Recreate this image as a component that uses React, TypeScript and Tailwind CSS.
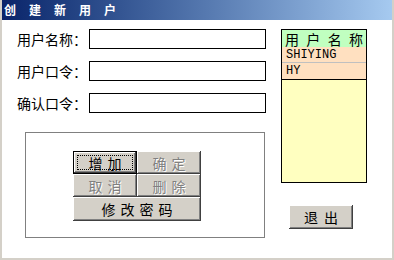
import React from 'react';

const cjk = { fontFamily: '"Noto Sans CJK SC", "Liberation Sans", sans-serif' };

const raised =
  'bg-[#d4d0c8] shadow-[inset_-1px_-1px_0_#404040,inset_1px_1px_0_#ffffff,inset_-2px_-2px_0_#808080]';

const Btn = ({
  label,
  disabled,
  focused,
  className = '',
}: {
  label: string;
  disabled?: boolean;
  focused?: boolean;
  className?: string;
}) => {
  if (focused) {
    return (
      <div className={`border border-black ${className}`}>
        <div className={`${raised} h-full p-[3px]`}>
          <div className="h-full border border-dotted border-black flex items-center justify-center text-[14px] leading-none text-black tracking-[5px] pl-[5px]">
            {label}
          </div>
        </div>
      </div>
    );
  }
  return (
    <div
      className={`${raised} flex items-center justify-center text-[14px] leading-none tracking-[5px] pl-[5px] ${
        disabled ? 'text-[#808080] [text-shadow:1px_1px_0_#ffffff]' : 'text-black'
      } ${className}`}
    >
      {label}
    </div>
  );
};

const fields = ['用户名称：', '用户口令：', '确认口令：'];

export default function App() {
  return (
    <div className="w-[394px] h-[260px] bg-[#d4d0c8] px-[2px] pb-[2px] flex flex-col" style={cjk}>
      <div className="h-[20px] bg-gradient-to-r from-[#0a246a] to-[#a6caf0] flex items-center pl-[2px]">
        <span className="text-white font-bold text-[12px] tracking-[13px] leading-none">创建新用户</span>
      </div>
      <div className="flex-1 bg-white flex pt-[9px]">
        {/* left side */}
        <div className="w-[279px] pl-[15px] flex flex-col">
          <div className="flex flex-col gap-[12px]">
            {fields.map((f) => (
              <div key={f} className="flex items-center h-[20px]">
                <span className="w-[72px] text-[14px] leading-none text-black">{f}</span>
                <div className="w-[177px] h-[20px] border border-black bg-white" />
              </div>
            ))}
          </div>
          <div className="mt-[19px] ml-[8px] w-[240px] h-[106px] border border-[#808080] pt-[18px] pl-[47px]">
            <div className="grid grid-cols-[64px_64px] w-[128px]">
              <Btn label="增加" focused className="h-[23px]" />
              <Btn label="确定" disabled className="h-[23px]" />
              <Btn label="取消" disabled className="h-[23px]" />
              <Btn label="删除" disabled className="h-[23px]" />
              <Btn label="修改密码" className="h-[24px] col-span-2" />
            </div>
          </div>
        </div>

        {/* right side */}
        <div className="flex flex-col">
          <div className="w-[86px] h-[154px] border border-black bg-[#ffffc0] flex flex-col">
            <div className="h-[17px] bg-[#c0ffc0] flex items-center justify-between px-[3px] text-[14px] leading-none text-black">
              <span>用</span>
              <span>户</span>
              <span>名</span>
              <span>称</span>
            </div>
            <div
              className="h-[16px] bg-[#ffe0c0] border-b border-[#c0c0c0] flex items-center pl-[4px] text-[12px] leading-none text-black"
              style={{ fontFamily: '"Liberation Mono", monospace' }}
            >
              SHIYING
            </div>
            <div
              className="h-[17px] bg-[#ffe0c0] border-b border-black flex items-center pl-[4px] text-[12px] leading-none text-black"
              style={{ fontFamily: '"Liberation Mono", monospace' }}
            >
              HY
            </div>
          </div>
          <div className="mt-[22px] ml-[8px]">
            <div className="w-[64px] h-[24px] bg-[#d4d0c8] shadow-[inset_-1px_-1px_0_#404040,inset_1px_1px_0_#ffffff,inset_-2px_-2px_0_#808080] flex items-center justify-center text-[14px] leading-none tracking-[6px] pl-[6px] text-black">
              退出
            </div>
          </div>
        </div>
      </div>
    </div>
  );
}
